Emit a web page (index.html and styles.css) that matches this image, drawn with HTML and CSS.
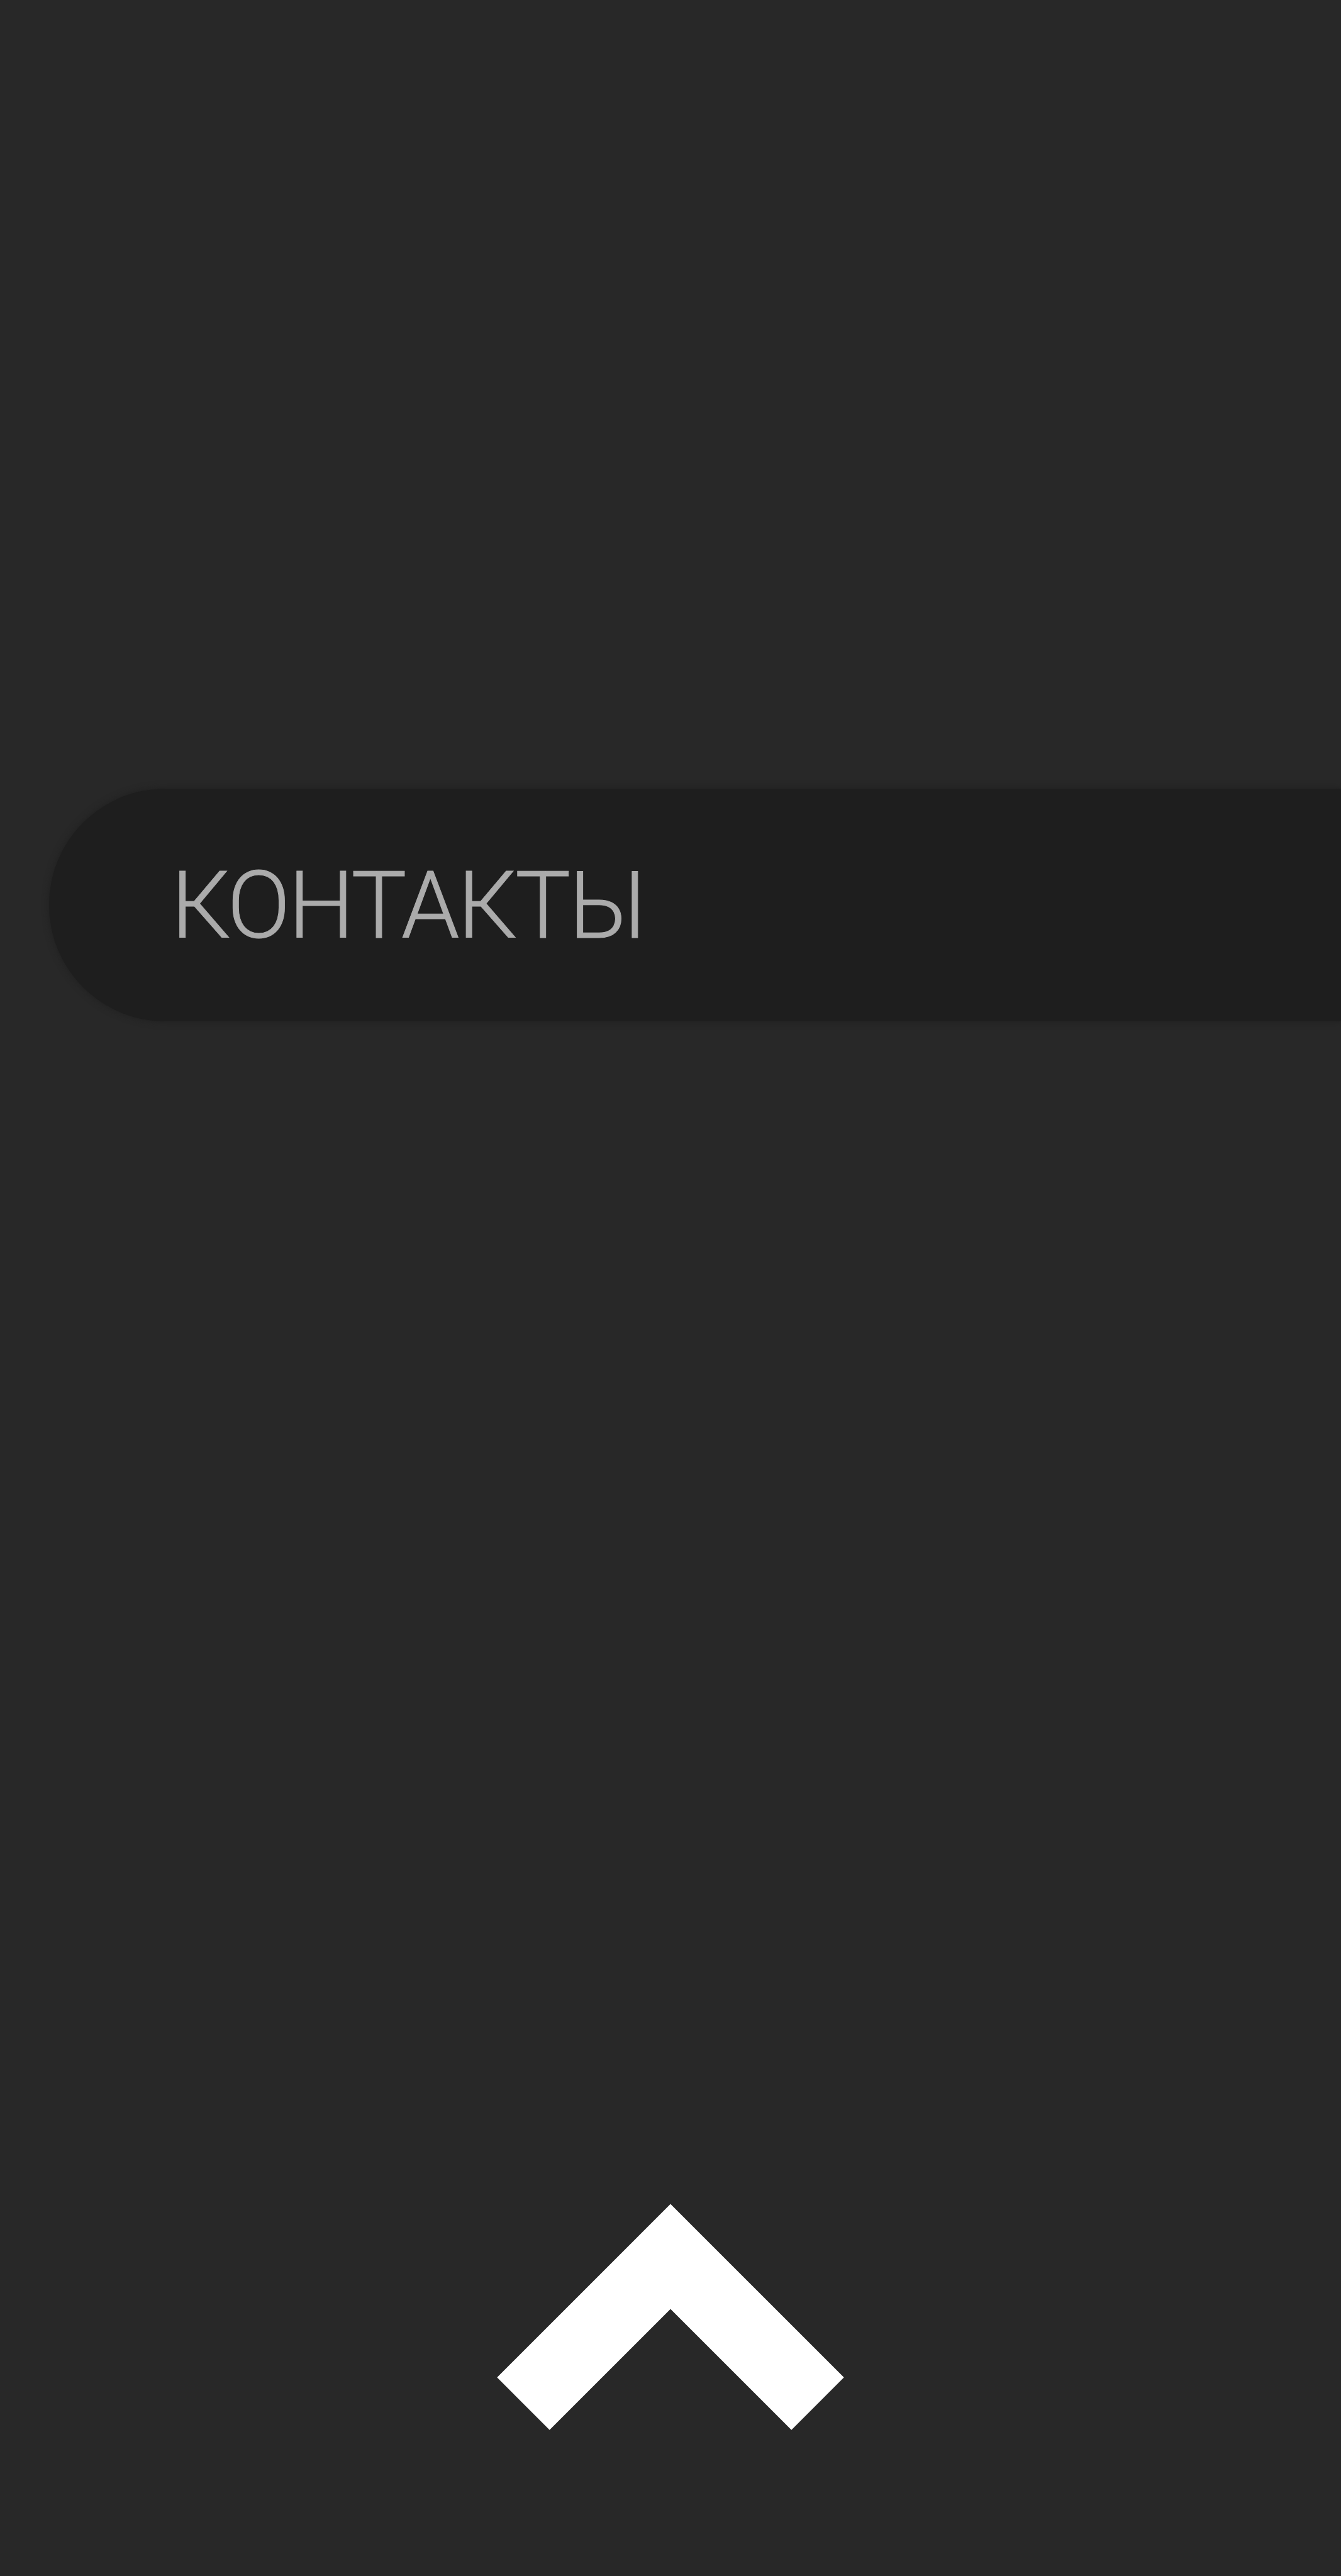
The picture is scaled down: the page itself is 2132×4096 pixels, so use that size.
FILE: index.html
```html
<!DOCTYPE html>
<html lang="ru">
<head>
<meta charset="utf-8">
<title>Контакты</title>
<link rel="stylesheet" href="styles.css">
</head>
<body>
<main class="page">
  <nav class="menu">
    <a class="menu-item" href="#contacts">КОНТАКТЫ</a>
  </nav>
  <div class="to-top">
    <svg class="to-top-icon" width="600" height="420" viewBox="0 0 600 420" aria-label="Наверх">
      <polyline points="66,342 300,108 534,342" fill="none" stroke="#ffffff" stroke-width="118" stroke-linejoin="miter" stroke-linecap="butt" stroke-miterlimit="4"/>
    </svg>
  </div>
</main>
</body>
</html>
```
FILE: styles.css
```css
html, body {
  margin: 0;
  padding: 0;
  background: #282828;
}
.page {
  display: flex;
  flex-direction: column;
  min-height: 4096px;
  font-family: Roboto, "Noto Sans", "Liberation Sans", sans-serif;
}
.menu {
  margin-top: 1254px;
  margin-left: 78px;
}
.menu-item {
  display: flex;
  align-items: center;
  height: 370px;
  padding-left: 194px;
  padding-top: 4px;
  box-sizing: border-box;
  background: #1e1e1e;
  border-radius: 185px 0 0 185px;
  box-shadow: 0 0 10px 2px #222222;
  color: #ababab;
  font-size: 148px;
  font-weight: 300;
  letter-spacing: -3px;
  text-decoration: none;
  line-height: 1;
  -webkit-text-stroke: 1px #ababab;
}
.to-top {
  display: flex;
  justify-content: center;
  margin-top: 1856px;
}
.to-top-icon {
  display: block;
}
```
